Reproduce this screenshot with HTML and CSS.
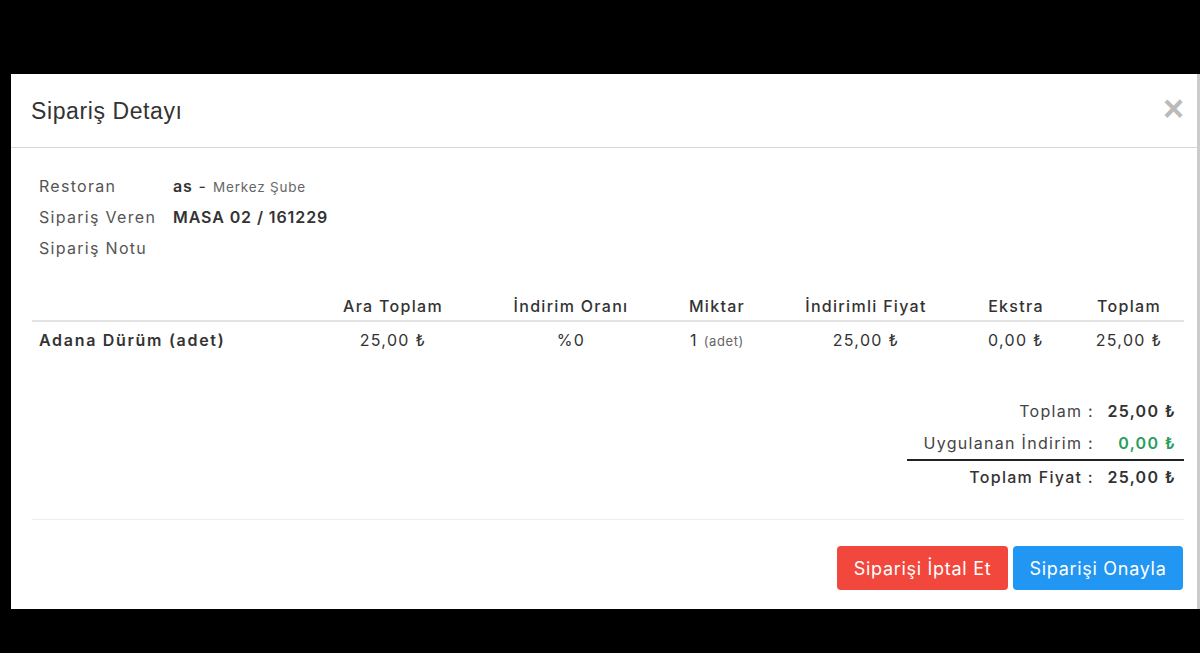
FILE: index.html
```html
<!DOCTYPE html>
<html lang="tr">
<head>
    <meta charset="UTF-8">
    <title>Sipariş Detayı</title>
    <link rel="stylesheet" href="styles.css">
</head>
<body>
    <div class="modal">
        <div class="modal-header">
            <h2>Sipariş Detayı</h2>
            <span class="close">&times;</span>
        </div>
        <div class="modal-body">
            <table class="info">
                <tr>
                    <td class="info-label">Restoran</td>
                    <td><b>as</b> - <span class="branch">Merkez Şube</span></td>
                </tr>
                <tr>
                    <td class="info-label">Sipariş Veren</td>
                    <td><b>MASA 02 / 161229</b></td>
                </tr>
                <tr>
                    <td class="info-label">Sipariş Notu</td>
                    <td></td>
                </tr>
            </table>

            <table class="items">
                <thead>
                    <tr>
                        <th class="col-name"></th>
                        <th class="col-sub">Ara Toplam</th>
                        <th class="col-rate">İndirim Oranı</th>
                        <th class="col-qty">Miktar</th>
                        <th class="col-disc">İndirimli Fiyat</th>
                        <th class="col-extra">Ekstra</th>
                        <th class="col-total">Toplam</th>
                    </tr>
                </thead>
                <tbody>
                    <tr>
                        <td class="item-name">Adana Dürüm (adet)</td>
                        <td>25,00 ₺</td>
                        <td>%0</td>
                        <td>1 <span class="unit">(adet)</span></td>
                        <td>25,00 ₺</td>
                        <td>0,00 ₺</td>
                        <td>25,00 ₺</td>
                    </tr>
                </tbody>
            </table>

            <div class="totals-wrap">
                <table class="totals">
                    <tr>
                        <td class="t-label">Toplam :</td>
                        <td class="t-value">25,00 ₺</td>
                    </tr>
                    <tr class="discount-row">
                        <td class="t-label">Uygulanan İndirim :</td>
                        <td class="t-value green">0,00 ₺</td>
                    </tr>
                    <tr class="grand-row">
                        <td class="t-label">Toplam Fiyat :</td>
                        <td class="t-value">25,00 ₺</td>
                    </tr>
                </table>
            </div>
        </div>
        <div class="modal-footer">
            <button class="btn btn-cancel">Siparişi İptal Et</button>
            <button class="btn btn-confirm">Siparişi Onayla</button>
        </div>
    </div>
</body>
</html>
```

FILE: styles.css
```css
body {
    margin: 0;
    padding: 0;
    background-color: #000;
    font-family: Inter, "Noto Sans", sans-serif;
    color: #333;
}
.modal {
    margin: 74px 0 0 11px;
    width: 1186px;
    height: 535px;
    background-color: #fff;
    border-right: 3px solid #ccc;
    display: flex;
    flex-direction: column;
}
.modal-header {
    height: 73px;
    border-bottom: 1px solid #d8d8d8;
    display: flex;
    align-items: center;
    justify-content: space-between;
    padding: 0 13px 0 20px;
}
.modal-header h2 {
    margin: 0;
    font-family: "Liberation Sans", Arial, sans-serif;
    font-weight: normal;
    font-size: 23px;
    letter-spacing: 0.6px;
    color: #333;
    padding-top: 1px;
}
.close {
    font-family: "Liberation Sans", Arial, sans-serif;
    font-size: 36px;
    font-weight: bold;
    color: #bbb;
    line-height: 1;
    margin-top: -4px;
}
.modal-body {
    padding: 22px 13px 0 21px;
    font-size: 16px;
    letter-spacing: 1.3px;
}
.info {
    border-collapse: collapse;
}
.info td {
    height: 31px;
    padding: 0 0 0 7px;
    vertical-align: middle;
    color: #333;
}
.info .info-label {
    width: 127px;
    color: #555;
}
.info b {
    font-weight: 600;
    letter-spacing: 0.9px;
    color: #333;
}
.branch {
    font-size: 13.5px;
    letter-spacing: 0.8px;
    color: #666;
}
.items {
    width: 1152px;
    border-collapse: collapse;
    margin-top: 28px;
    table-layout: fixed;
}
.items th {
    height: 29px;
    font-weight: 500;
    color: #333;
    border-bottom: 2px solid #e3e3e3;
    text-align: center;
    padding: 0;
    vertical-align: middle;
}
.items td {
    height: 36px;
    text-align: center;
    color: #333;
    padding: 0;
}
.items .item-name {
    text-align: left;
    padding-left: 7px;
    font-weight: 600;
    letter-spacing: 1.7px;
}
.col-name { width: 272px; }
.col-sub { width: 178px; }
.col-rate { width: 178px; }
.col-qty { width: 114px; }
.col-disc { width: 184px; }
.col-extra { width: 116px; }
.col-total { width: 110px; }
.unit {
    font-size: 13px;
    letter-spacing: 0.6px;
    color: #666;
}
.totals-wrap {
    display: flex;
    justify-content: flex-end;
    margin-top: 37px;
    width: 1152px;
}
.totals {
    width: 277px;
    border-collapse: collapse;
}
.totals td {
    height: 32px;
    padding: 0;
    white-space: nowrap;
}
.t-label {
    text-align: right;
    color: #444;
}
.t-value {
    width: 82px;
    text-align: right;
    padding-right: 8px !important;
    font-weight: 600;
    color: #333;
}
.green {
    color: #2a9d5c;
}
.discount-row td {
    border-bottom: 2px solid #222;
}
.grand-row .t-label {
    font-weight: 500;
    color: #333;
}
.modal-footer {
    margin: 26px 13px 0 21px;
    border-top: 1px solid #eee;
    padding-top: 26px;
    display: flex;
    justify-content: flex-end;
    gap: 5px;
}
.btn {
    height: 44px;
    border: none;
    border-radius: 4px;
    color: #fff;
    font-family: Inter, "Noto Sans", sans-serif;
    font-size: 18px;
    letter-spacing: 0.7px;
    cursor: pointer;
}
.btn-cancel {
    width: 171px;
    background-color: #f2473c;
}
.btn-confirm {
    width: 170px;
    background-color: #2196f3;
    margin-right: 1px;
}
```
